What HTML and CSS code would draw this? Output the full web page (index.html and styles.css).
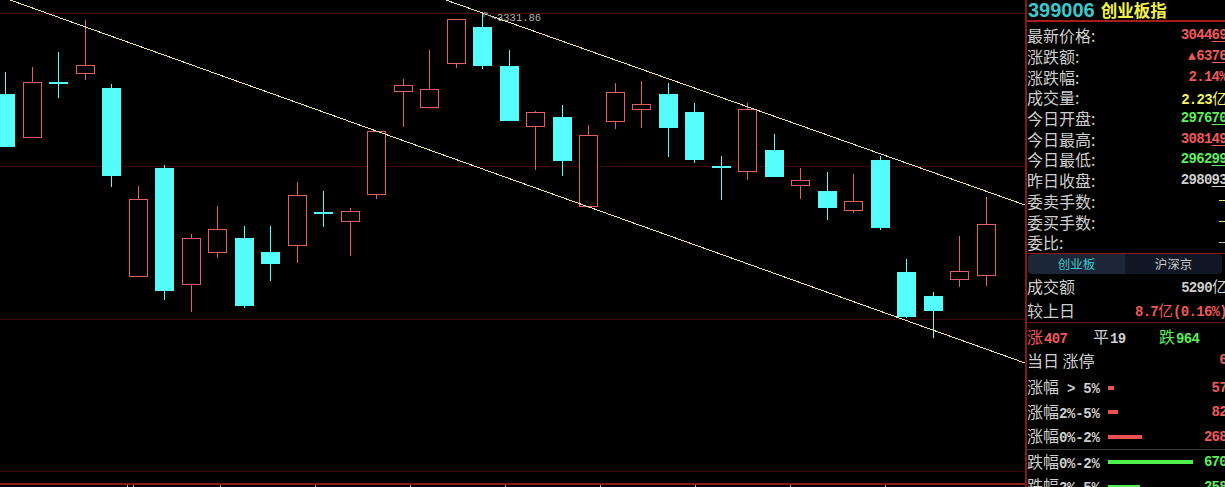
FILE: index.html
```html
<!DOCTYPE html>
<html lang="zh-CN">
<head>
    <meta charset="UTF-8">
    <meta name="viewport" content="width=device-width, initial-scale=1.0">
    <title>创业板指 K线</title>
    <link rel="stylesheet" href="styles.css">
</head>
<body>
    <div class="screen">
        <!-- K线区域 -->
        <div class="chart">
            <svg id="kline" width="1025" height="487" viewBox="0 0 1025 487">
                <g class="grid">
                    <line x1="0" y1="13.5" x2="1025" y2="13.5"/>
                    <line x1="0" y1="166.5" x2="1025" y2="166.5"/>
                    <line x1="0" y1="319.5" x2="1025" y2="319.5"/>
                    <line x1="0" y1="471.5" x2="1025" y2="471.5"/>
                </g>
                <g id="candles"></g>
                <g class="channel">
                    <line x1="0" y1="-3.6" x2="1025" y2="363"/>
                    <line x1="443" y1="-1" x2="1025" y2="205"/>
                </g>
                <g class="peak">
                    <line x1="484" y1="13" x2="496" y2="19"/>
                    <line x1="484" y1="13" x2="484" y2="17"/>
                    <line x1="484" y1="13" x2="488" y2="13"/>
                    <text x="497" y="21">3331.86</text>
                </g>
                <rect class="axis" x="0" y="483" width="1025" height="2"/>
                <g class="ticks" id="ticks"></g>
            </svg>
        </div>

        <!-- 右侧行情面板 -->
        <div class="panel">
            <div class="head">
                <span class="code">399006</span>
                <span class="name">创业板指</span>
            </div>

            <div class="quotes">
                <div class="quote-row"><span class="lbl">最新价格:</span><span class="val red">3044<u>69</u></span></div>
                <div class="quote-row"><span class="lbl">涨跌额:</span><span class="val red"><small>▲</small>63<u>76</u></span></div>
                <div class="quote-row"><span class="lbl">涨跌幅:</span><span class="val red">2.14%</span></div>
                <div class="quote-row"><span class="lbl">成交量:</span><span class="val yellow">2.23<span class="cn">亿</span></span></div>
                <div class="quote-row"><span class="lbl">今日开盘:</span><span class="val green">2976<u>70</u></span></div>
                <div class="quote-row"><span class="lbl">今日最高:</span><span class="val red">3081<u>49</u></span></div>
                <div class="quote-row"><span class="lbl">今日最低:</span><span class="val green">2962<u>99</u></span></div>
                <div class="quote-row"><span class="lbl">昨日收盘:</span><span class="val gray">2980<u>93</u></span></div>
                <div class="quote-row"><span class="lbl">委卖手数:</span><span class="dash yellow-bg"></span></div>
                <div class="quote-row"><span class="lbl">委买手数:</span><span class="dash yellow-bg"></span></div>
                <div class="quote-row"><span class="lbl">委比:</span><span class="dash gray-bg"></span></div>
            </div>

            <div class="tabs">
                <div class="tab active">创业板</div>
                <div class="tab">沪深京</div>
            </div>

            <div class="market-row"><span class="lbl">成交额</span><span class="val gray">5290<span class="cn">亿</span></span></div>
            <div class="market-row"><span class="lbl">较上日</span><span class="val red">8.7<span class="cn">亿</span>(0.16%)</span></div>

            <div class="updown-row">
                <span class="ud red"><span class="cn">涨</span>407</span>
                <span class="ud gray"><span class="cn">平</span>19</span>
                <span class="ud green"><span class="cn">跌</span>964</span>
            </div>

            <div class="limit-row"><span class="lbl">当日 涨停</span><span class="val red">6</span></div>

            <div class="dist">
                <div class="dist-row"><span class="lbl">涨幅<span class="mono"> &gt; 5%</span></span><span class="bar red-bg" style="width:6px"></span><span class="val red">57</span></div>
                <div class="dist-row"><span class="lbl">涨幅<span class="mono">2%-5%</span></span><span class="bar red-bg" style="width:10px"></span><span class="val red">82</span></div>
                <div class="dist-row"><span class="lbl">涨幅<span class="mono">0%-2%</span></span><span class="bar red-bg" style="width:34px"></span><span class="val red">268</span></div>
                <div class="dist-row down"><span class="lbl">跌幅<span class="mono">0%-2%</span></span><span class="bar green-bg" style="width:85px"></span><span class="val green">670</span></div>
                <div class="dist-row"><span class="lbl">跌幅<span class="mono">2%-5%</span></span><span class="bar green-bg" style="width:32px"></span><span class="val green">258</span></div>
            </div>
        </div>
    </div>

    <script>
        // 每根K线: 类型(r阳线 / c阴线 / x十字), 最高, 实体上沿, 实体下沿, 最低 (单位: 像素)
        const candles = [
            ['c', 72, 94, 146, 146], ['r', 67, 82, 137, 137], ['x', 52, 82, 82, 97],
            ['r', 20, 65, 73, 79], ['c', 84, 88, 175, 186], ['r', 186, 199, 276, 276],
            ['c', 165, 168, 290, 299], ['r', 234, 238, 284, 311], ['r', 206, 229, 252, 257],
            ['c', 226, 238, 305, 307], ['c', 226, 252, 263, 280], ['r', 182, 195, 245, 262],
            ['x', 191, 212, 212, 226], ['r', 208, 211, 221, 255], ['r', 131, 131, 194, 198],
            ['r', 79, 85, 91, 126], ['r', 50, 89, 107, 107], ['r', 19, 19, 63, 67],
            ['c', 12, 27, 65, 68], ['c', 50, 66, 120, 120], ['r', 111, 112, 126, 169],
            ['c', 105, 117, 160, 175], ['r', 125, 135, 206, 207], ['r', 83, 92, 121, 128],
            ['r', 81, 104, 109, 127], ['c', 83, 94, 127, 156], ['c', 103, 112, 159, 162],
            ['x', 156, 166, 166, 199], ['r', 103, 109, 171, 179], ['c', 134, 150, 176, 176],
            ['r', 168, 180, 185, 198], ['c', 172, 191, 207, 219], ['r', 174, 201, 210, 212],
            ['c', 156, 160, 227, 229], ['c', 259, 272, 316, 317], ['c', 292, 296, 310, 337],
            ['r', 236, 271, 279, 286], ['r', 197, 224, 275, 285]
        ];

        function drawCandles() {
            let html = '';
            candles.forEach((k, i) => {
                const [type, high, top, bottom, low] = k;
                const center = 5.3 + 26.5 * i;
                const x = Math.round(center) + 0.5;
                const left = Math.round(center - 9);
                const cls = type === 'r' ? 'up' : 'down';

                html += `<line class="wick ${cls}" x1="${x}" y1="${high}" x2="${x}" y2="${low + 1}"/>`;
                if (type === 'r') {
                    html += `<rect class="body up" x="${left + 0.5}" y="${top + 0.5}" width="18" height="${bottom - top}"/>`;
                } else if (type === 'c') {
                    html += `<rect class="body down" x="${left}" y="${top}" width="19" height="${bottom - top + 1}"/>`;
                } else {
                    html += `<rect class="body down" x="${left}" y="${top}" width="19" height="2"/>`;
                }
            });
            document.getElementById('candles').innerHTML = html;

            // 底部时间刻度
            const ticks = [127, 133, 220, 315, 410, 505, 600, 695, 790, 885];
            document.getElementById('ticks').innerHTML = ticks
                .map(t => `<line x1="${t + 0.5}" y1="485" x2="${t + 0.5}" y2="487"/>`)
                .join('');
        }

        drawCandles();
    </script>
</body>
</html>
```

FILE: styles.css
```css
/* 整体 */
body {
    margin: 0;
    background: #000;
    overflow: hidden;
    font-family: "Noto Sans CJK SC", "Liberation Sans", sans-serif;
    color: #c8c8c8;
}

.screen {
    display: flex;
    width: 1227px;
    height: 487px;
}

/* K线图 */
.chart {
    flex: none;
    width: 1025px;
}

.chart svg {
    display: block;
}

.grid line {
    stroke: #3e0606;
    stroke-width: 1;
}

.channel line {
    stroke: #f2e3a6;
    stroke-width: 1;
    shape-rendering: crispEdges;
}

.wick {
    stroke-width: 1;
    shape-rendering: crispEdges;
}

.wick.up {
    stroke: #e4605c;
}

.wick.down {
    stroke: #55fcfc;
}

.body {
    shape-rendering: crispEdges;
}

.body.up {
    fill: #000;
    stroke: #e4605c;
    stroke-width: 1;
}

.body.down {
    fill: #55fcfc;
}

.peak line {
    stroke: #a8a8a8;
    stroke-width: 1;
}

.peak text {
    fill: #b4b4b4;
    font-family: "Liberation Mono", monospace;
    font-size: 10.5px;
}

.axis {
    fill: #8e1a1a;
}

.ticks line {
    stroke: #b8c090;
}

/* 右侧面板 */
.panel {
    flex: none;
    width: 200px;
    height: 487px;
    overflow: hidden;
    border-left: 2px solid #861818;
}

.head {
    height: 20px;
    border-bottom: 2px solid #a81c1c;
    display: flex;
    align-items: center;
    gap: 6px;
    padding-left: 1px;
}

.code {
    font-family: "Liberation Sans", sans-serif;
    font-weight: bold;
    font-size: 20px;
    color: #3cc8cc;
    line-height: 20px;
}

.name {
    font-size: 16.5px;
    font-weight: bold;
    color: #f2f24a;
    line-height: 20px;
}

.quotes {
    padding-top: 3px;
    border-bottom: 1px solid #8e1a1a;
}

.quote-row,
.market-row,
.limit-row {
    display: flex;
    justify-content: space-between;
    align-items: center;
}

.quote-row {
    height: 20.7px;
}

.lbl {
    font-size: 16px;
    line-height: 20px;
    color: #cfcfcf;
    white-space: nowrap;
}

.val {
    font-family: "Liberation Mono", monospace;
    font-weight: bold;
    font-size: 14px;
    letter-spacing: -0.7px;
    white-space: nowrap;
}

.val u {
    text-underline-offset: 2px;
}

.val small {
    font-size: 13px;
    margin-right: 1px;
}

.cn {
    font-family: "Noto Sans CJK SC", sans-serif;
    font-weight: normal;
    font-size: 15px;
    letter-spacing: 0;
}

.red { color: #f05a5a; }
.green { color: #5eee5e; }
.yellow { color: #f4f45a; }
.gray { color: #cfcfcf; }

.red-bg { background: #f05050; }
.green-bg { background: #4ef04e; }
.yellow-bg { background: #e8e85a; }
.gray-bg { background: #bdbdbd; }

.dash {
    width: 8px;
    height: 1px;
}

/* 板块切换 */
.tabs {
    display: flex;
    height: 20px;
    margin: 0 5px 0 1px;
}

.tab {
    flex: 1;
    display: flex;
    align-items: center;
    justify-content: center;
    font-size: 12.5px;
    background: #111724;
    color: #c8c8c8;
}

.tab.active {
    background: #1c2638;
    color: #3cc8cc;
    border-radius: 4px 0 0 4px;
}

.tab:last-child {
    border-radius: 0 4px 4px 0;
}

.market-row {
    height: 24px;
}

.updown-row {
    height: 26px;
    border-top: 1px solid #6a1414;
    display: flex;
    align-items: center;
}

.ud {
    font-family: "Liberation Mono", monospace;
    font-weight: bold;
    font-size: 14px;
    letter-spacing: -0.7px;
    width: 66px;
}

.ud .cn {
    font-size: 16px;
    margin-right: 1px;
}

.limit-row {
    height: 22px;
}

/* 涨跌分布 */
.dist {
    margin-top: 5px;
}

.dist-row {
    height: 24.5px;
    display: flex;
    align-items: center;
}

.dist-row.down {
    border-top: 1px solid #3c3c3c;
}

.dist-row .lbl {
    width: 81px;
}

.mono {
    font-family: "Liberation Mono", monospace;
    font-weight: bold;
    font-size: 14px;
    letter-spacing: -0.3px;
}

.bar {
    height: 4px;
}

.dist-row .val {
    margin-left: auto;
}
```
